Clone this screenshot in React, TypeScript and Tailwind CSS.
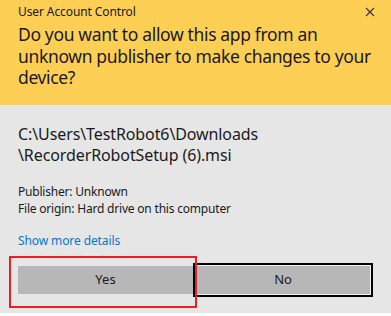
export default function App() {
  return (
    <div className="relative w-[391px] h-[316px] bg-white font-['Noto_Sans',sans-serif]">
      <div className="w-[391px] h-[313px] bg-[#e6e6e6] flex flex-col">
        {/* header */}
        <div className="h-[105px] bg-[#fecf55] pl-[18px] pr-[14px] text-[#1a1a1a]">
          <div className="flex items-center justify-between h-[24px]">
            <span className="text-[12px] leading-[16px] tracking-[-0.1px]">User Account Control</span>
            <svg width="10" height="10" viewBox="0 0 10 10" className="mr-[2px]">
              <path d="M1 1 L9 9 M9 1 L1 9" stroke="#333" strokeWidth="1.1" />
            </svg>
          </div>
          <p className="w-[358px] text-[17.5px] leading-[21.5px] tracking-[-0.35px]">
            Do you want to allow this app from an unknown publisher to make changes to your device?
          </p>
        </div>

        {/* body */}
        <div className="pl-[18px] pt-[19px] text-[#1a1a1a]">
          <p className="text-[16px] leading-[21px] tracking-[-0.1px]">
            C:\Users\TestRobot6\Downloads
            <br />
            \RecorderRobotSetup (6).msi
          </p>
          <div className="mt-[17px] text-[12px] leading-[17px] tracking-[-0.2px]">
            <p>Publisher: Unknown</p>
            <p>File origin: Hard drive on this computer</p>
          </div>
          <p className="mt-[15px] text-[12px] leading-[17px] tracking-[-0.1px] text-[#0078d7]">Show more details</p>
        </div>

        {/* buttons */}
        <div className="flex items-center pl-[18px] mt-[14px]">
          <button className="w-[175px] h-[28px] bg-[#b7b7b7] text-[13px] text-[#1a1a1a]">Yes</button>
          <button className="w-[180px] h-[34px] border-2 border-black text-[13px] text-[#1a1a1a]">
            <div className="h-full border border-[#f2f2f2] bg-[#b7b7b7] flex items-center justify-center">No</div>
          </button>
        </div>
      </div>

      {/* red highlight annotation */}
      <div className="absolute left-[9px] top-[256px] w-[188px] h-[52px] border-2 border-[#ee1c25]" />
    </div>
  );
}
